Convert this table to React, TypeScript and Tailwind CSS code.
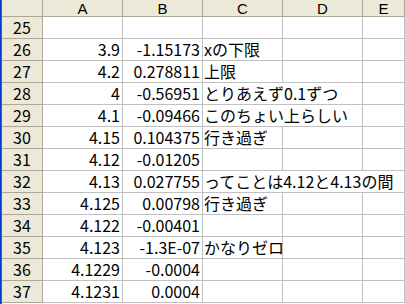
import React from "react";

type R = { n: number; a?: string; b?: string; c?: string; span?: number };

const rows: R[] = [
  { n: 25 },
  { n: 26, a: "3.9", b: "-1.15173", c: "xの下限" },
  { n: 27, a: "4.2", b: "0.278811", c: "上限" },
  { n: 28, a: "4", b: "-0.56951", c: "とりあえず0.1ずつ", span: 2 },
  { n: 29, a: "4.1", b: "-0.09466", c: "このちょい上らしい", span: 2 },
  { n: 30, a: "4.15", b: "0.104375", c: "行き過ぎ" },
  { n: 31, a: "4.12", b: "-0.01205" },
  { n: 32, a: "4.13", b: "0.027755", c: "ってことは4.12と4.13の間", span: 3 },
  { n: 33, a: "4.125", b: "0.00798", c: "行き過ぎ" },
  { n: 34, a: "4.122", b: "-0.00401" },
  { n: 35, a: "4.123", b: "-1.3E-07", c: "かなりゼロ" },
  { n: 36, a: "4.1229", b: "-0.0004" },
  { n: 37, a: "4.1231", b: "0.0004" },
];

const cell =
  "h-[22px] border-r border-b border-[#c0c0c0] flex items-end pb-[1px] leading-[20px] whitespace-nowrap overflow-visible";

export default function App() {
  return (
    <div className="w-[405px] h-[304px] overflow-hidden bg-white flex font-['Noto_Sans_CJK_JP',sans-serif] text-[16px] text-black">
      <div className="w-[2px] h-full bg-[#2a5ddb] border-l border-[#0b3bc4]" />
      <div className="flex-1 flex flex-col">
        <div className="grid grid-cols-[41px_80px_80px_80px_80px_1fr] h-[17px] bg-[#ece9d8] border-b border-[#aca899]">
          <div className="border-r border-[#aca899]" />
          {["A", "B", "C", "D", "E"].map((h) => (
            <div
              key={h}
              className="h-[16px] border-r border-[#aca899] flex items-start justify-center pt-[1px] font-['Liberation_Sans',sans-serif] text-[15px] leading-[16px]"
            >
              {h}
            </div>
          ))}
        </div>
        {rows.map((r) => (
          <div
            key={r.n}
            className="grid grid-cols-[41px_80px_80px_80px_80px_1fr]"
          >
            <div className="h-[22px] bg-[#ece9d8] border-r border-b border-[#aca899] flex items-end justify-center pb-[1px] leading-[20px]">
              {r.n}
            </div>
            <div className={`${cell} justify-end pr-[2px]`}>{r.a ?? ""}</div>
            <div className={`${cell} justify-end pr-[2px]`}>{r.b ?? ""}</div>
            {r.span === 3 ? (
              <div className={`${cell} col-span-3 pl-[1px]`}>{r.c}</div>
            ) : r.span === 2 ? (
              <>
                <div className={`${cell} col-span-2 pl-[1px]`}>{r.c}</div>
                <div className={cell} />
              </>
            ) : (
              <>
                <div className={`${cell} pl-[1px]`}>{r.c ?? ""}</div>
                <div className={cell} />
                <div className={cell} />
              </>
            )}
          </div>
        ))}
      </div>
    </div>
  );
}
